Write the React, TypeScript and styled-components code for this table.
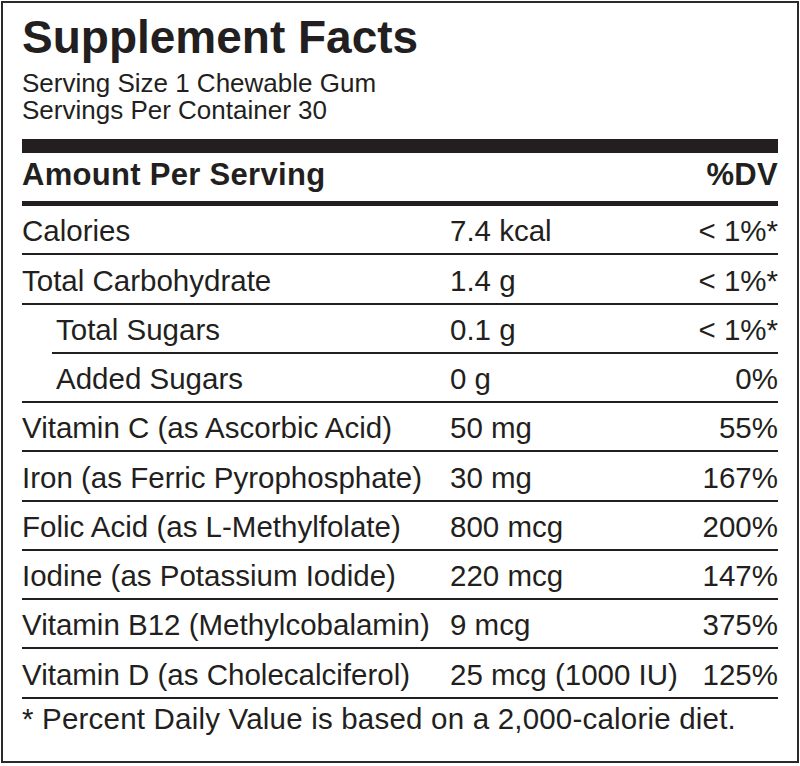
import React from "react";
import styled, { createGlobalStyle } from "styled-components";

const Global = createGlobalStyle`
  html, body { margin: 0; padding: 0; background: #ffffff; }
  body { font-family: "Liberation Sans", Arial, Helvetica, sans-serif; color: #231f20; }
`;

const Label = styled.section`
  margin: 1px;
  width: 798px;
  box-sizing: border-box;
  border: 2px solid #2a2a2a;
  padding: 8px 19px 25px 19px;
  background: #ffffff;
`;

const Title = styled.h1`
  margin: 0;
  font-size: 46px;
  line-height: 52px;
  font-weight: 700;
`;

const Serving = styled.p`
  margin: 6.5px 0 0 0;
  font-size: 26px;
  line-height: 27.5px;
`;

const HeavyBar = styled.div`
  margin-top: 14.5px;
  height: 13.5px;
  background: #231f20;
`;

const HeaderRow = styled.div`
  display: flex;
  justify-content: space-between;
  align-items: baseline;
  padding: 5.5px 0 9px;
  font-size: 31px;
  line-height: 34px;
  font-weight: 700;
  letter-spacing: 0.3px;
  border-bottom: 5px solid #231f20;
`;

const Row = styled.div<{ $indent: number }>`
  display: grid;
  grid-template-columns: ${(p) => 428 - p.$indent}px 1fr auto;
  margin-left: ${(p) => p.$indent}px;
  padding: 8.25px 0 5px;
  font-size: 29.5px;
  line-height: 34px;
  border-bottom: 2px solid #231f20;
  white-space: nowrap;
`;

const Name = styled.span<{ $pad: number }>`
  padding-left: ${(p) => p.$pad}px;
`;

const Amount = styled.span``;

const DV = styled.span`
  text-align: right;
`;

const Footnote = styled.p`
  margin: 0;
  padding-top: 3.6px;
  font-size: 29.5px;
  line-height: 34px;
  letter-spacing: 0.2px;
`;

type Item = {
  name: string;
  amount: string;
  dv: string;
  rowIndent?: number;
  textIndent?: number;
};

const items: Item[] = [
  { name: "Calories", amount: "7.4 kcal", dv: "< 1%*" },
  { name: "Total Carbohydrate", amount: "1.4 g", dv: "< 1%*" },
  { name: "Total Sugars", amount: "0.1 g", dv: "< 1%*", rowIndent: 30, textIndent: 4 },
  { name: "Added Sugars", amount: "0 g", dv: "0%", textIndent: 34 },
  { name: "Vitamin C (as Ascorbic Acid)", amount: "50 mg", dv: "55%" },
  { name: "Iron (as Ferric Pyrophosphate)", amount: "30 mg", dv: "167%" },
  { name: "Folic Acid (as L-Methylfolate)", amount: "800 mcg", dv: "200%" },
  { name: "Iodine (as Potassium Iodide)", amount: "220 mcg", dv: "147%" },
  { name: "Vitamin B12 (Methylcobalamin)", amount: "9 mcg", dv: "375%" },
  { name: "Vitamin D (as Cholecalciferol)", amount: "25 mcg (1000 IU)", dv: "125%" },
];

export default function App() {
  return (
    <>
      <Global />
      <Label>
        <Title>Supplement Facts</Title>
        <Serving>
          Serving Size 1 Chewable Gum
          <br />
          Servings Per Container 30
        </Serving>
        <HeavyBar />
        <HeaderRow>
          <span>Amount Per Serving</span>
          <span>%DV</span>
        </HeaderRow>
        {items.map((it) => (
          <Row key={it.name} $indent={it.rowIndent ?? 0}>
            <Name $pad={it.textIndent ?? 0}>{it.name}</Name>
            <Amount>{it.amount}</Amount>
            <DV>{it.dv}</DV>
          </Row>
        ))}
        <Footnote>* Percent Daily Value is based on a 2,000-calorie diet.</Footnote>
      </Label>
    </>
  );
}
